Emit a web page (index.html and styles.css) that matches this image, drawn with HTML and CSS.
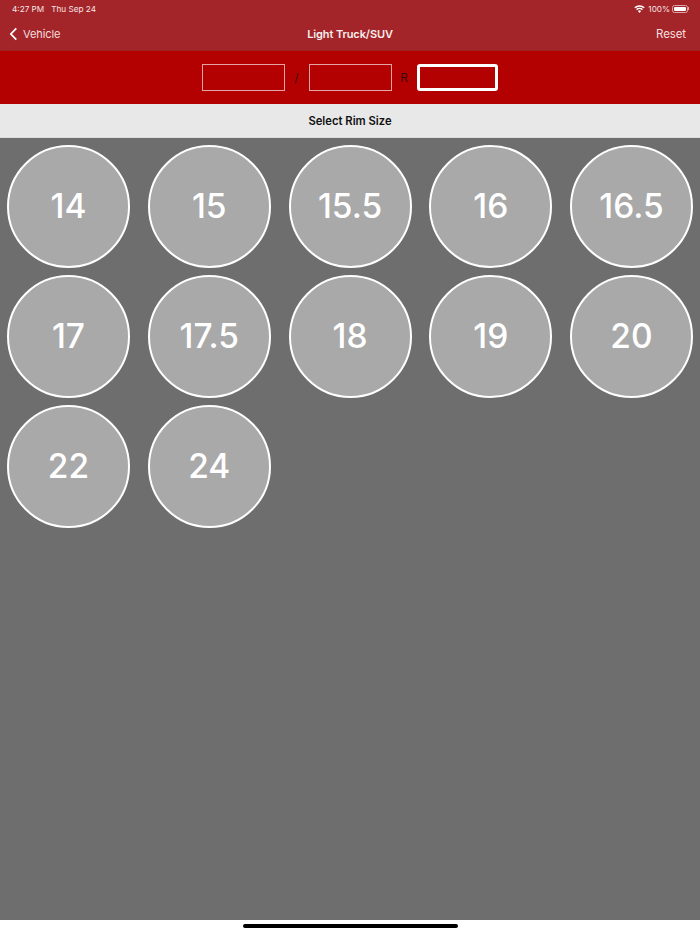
FILE: index.html
```html
<!DOCTYPE html>
<html lang="en">
<head>
<meta charset="utf-8">
<title>Light Truck/SUV</title>
<link rel="stylesheet" href="styles.css">
</head>
<body>
<div class="app">
  <header class="topbar">
    <div class="status">
      <div class="status-left"><span>4:27 PM</span><span>Thu Sep 24</span></div>
      <div class="status-right">
        <svg class="wifi" viewBox="0 0 14 10" aria-hidden="true"><path d="M7 10 4.9 7.6a3 3 0 0 1 4.2 0z"/><path d="M3.9 6.500 2.600 5.100a6.400 6.400 0 0 1 8.800 0l-1.300 1.400a4.500 4.500 0 0 0-6.200 0z"/><path d="M1.700 4.100.4 2.700a9.600 9.600 0 0 1 13.200 0l-1.300 1.400a7.700 7.700 0 0 0-10.600 0z"/></svg>
        <span>100%</span>
        <span class="battery"><span class="battery-fill"></span></span><span class="battery-cap"></span>
      </div>
    </div>
    <nav class="nav">
      <div class="back">
        <svg class="chevron" viewBox="0 0 10 16" aria-hidden="true"><path d="M8.200 1.500 2 8l6.200 6.500"/></svg>
        <span>Vehicle</span>
      </div>
      <div class="nav-title">Light Truck/SUV</div>
      <div class="reset">Reset</div>
    </nav>
  </header>
  <section class="size-band">
    <div class="size-field"></div>
    <span class="sep sep-slash">/</span>
    <div class="size-field"></div>
    <span class="sep sep-r">R</span>
    <div class="size-field active"></div>
  </section>
  <div class="prompt">Select Rim Size</div>
  <main class="rims">
    <button class="rim">14</button>
    <button class="rim">15</button>
    <button class="rim">15.5</button>
    <button class="rim">16</button>
    <button class="rim">16.5</button>
    <button class="rim">17</button>
    <button class="rim">17.5</button>
    <button class="rim">18</button>
    <button class="rim">19</button>
    <button class="rim">20</button>
    <button class="rim">22</button>
    <button class="rim">24</button>
  </main>
  <footer class="home"><div class="home-bar"></div></footer>
</div>
</body>
</html>
```
FILE: styles.css
```css
* { box-sizing: border-box; }
html, body { margin: 0; padding: 0; height: 100%; }
body { font-family: Inter, "Liberation Sans", sans-serif; background: #fff; overflow: hidden; }
.app { width: 700px; height: 934px; display: flex; flex-direction: column; }

.topbar { height: 51px; background: #a32529; color: #fff; display: flex; flex-direction: column; border-bottom: 1px solid #9c2226; }
.status { height: 17px; padding: 0 11px 0 12px; display: flex; justify-content: space-between; align-items: center; font-size: 8.200px; color: #f6e4e4; }
.status-left { display: flex; gap: 7px; }
.status-right { display: flex; align-items: center; gap: 2px; }
.wifi { width: 11px; height: 8px; fill: #fff; margin-right: 1px; }
.battery { width: 16px; height: 8px; border: 1px solid #d9a5a7; border-radius: 2.500px; padding: 1px; display: flex; }
.battery-fill { flex: 1; background: #fff; border-radius: 1px; }
.battery-cap { width: 1px; height: 3px; background: #d9a5a7; margin-left: -2px; }

.nav { flex: 1; display: grid; grid-template-columns: 1fr auto 1fr; align-items: center; padding: 0 14px; font-size: 11.500px; letter-spacing: -0.1px; color: #f3dfdf; }
.back { display: flex; align-items: center; gap: 5px; margin-left: -5px; font-size: 11px; }
.chevron { width: 9px; height: 14px; fill: none; stroke: #fff; stroke-width: 2; }
.nav-title { font-weight: 600; color: #f8eeee; font-size: 11px; }
.reset { justify-self: end; }

.size-band { height: 53px; background: #b30000; display: flex; align-items: center; justify-content: center; padding-right: 1px; }
.size-field { width: 83px; height: 27px; border: 1px solid #e2a4a4; }
.size-field.active { width: 81px; border: 3px solid #fff; border-radius: 3px; }
.sep { color: #3f0606; font-size: 12px; text-align: center; }
.sep-slash { width: 24px; }
.sep-r { width: 25px; }

.prompt { height: 34px; background: #e8e8e8; display: flex; align-items: center; justify-content: center; font-size: 11.250px; font-weight: 600; color: #111; border-bottom: 1px solid #dcdcdc; }

.rims { flex: 1; background: #6e6e6e; padding: 7px; display: grid; grid-template-columns: repeat(5, 123px); grid-auto-rows: 123px; justify-content: space-between; align-content: start; row-gap: 7px; }
.rim { width: 123px; height: 123px; border-radius: 50%; border: 2.500px solid #fff; background: #a9a9a9; color: #fff; font-family: inherit; font-size: 33.500px; font-weight: 500; padding: 0 0 2px; }

.home { height: 14px; background: #fff; display: flex; justify-content: center; align-items: flex-start; padding-top: 4px; }
.home-bar { width: 215px; height: 4px; background: #000; border-radius: 2px; }
```
